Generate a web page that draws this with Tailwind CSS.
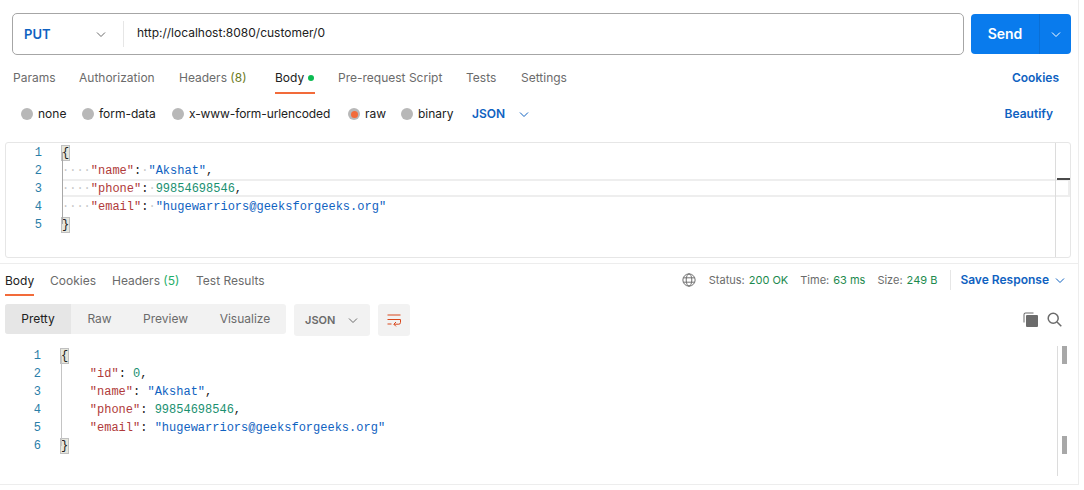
<!DOCTYPE html>
<html lang="en">
<head>
  <meta charset="UTF-8">
  <title>Postman</title>
  <script src="https://cdn.jsdelivr.net/npm/@tailwindcss/browser@4"></script>
</head>
<body class="bg-white font-['Inter',sans-serif] text-[12px] text-[#6b6b6b] overflow-hidden">
<div class="w-[1079px] h-[485px] border-r border-b border-[#ededed] overflow-hidden">

  <!-- Url bar -->
  <div class="flex gap-[7px] pl-3 pt-[13px] h-[55px]">
    <div class="flex shrink-0 items-center w-[952px] h-[42px] border border-[#a6a6a6] rounded-[5px]">
      <span class="w-[64px] pl-[11px] font-semibold text-[#0f62c1] text-[13px] leading-[18px]">PUT</span>
      <svg class="w-3 h-3 ml-[18px] text-[#6b6b6b]" viewBox="0 0 12 12" fill="none" stroke="currentColor"><path d="M2 4.5l4 4 4-4"/></svg>
      <div class="w-px h-[26px] bg-[#e6e6e6] ml-[16px]"></div>
      <span class="ml-[13px] text-[#212121] text-[12px] -mt-[3px]">http://localhost:8080/customer/0</span>
    </div>
    <div class="flex shrink-0 w-[100px] h-[40px] mt-px bg-[#097bed] rounded-[4px] text-white">
      <div class="w-[68px] flex items-center justify-center font-semibold text-[14px] -mt-px">Send</div>
      <div class="w-[32px] flex items-center justify-center border-l border-[#0a6fd6]">
        <svg class="w-3 h-3" viewBox="0 0 12 12" fill="none" stroke="currentColor"><path d="M2 4.5l4 4 4-4"/></svg>
      </div>
    </div>
  </div>

  <!-- Request tabs -->
  <div class="flex h-[39px] pl-[13px] pr-[19px]">
    <div class="pt-[14px] w-[66px]">Params</div>
    <div class="pt-[14px] w-[100px]">Authorization</div>
    <div class="pt-[14px] w-[96px]">Headers <span class="text-[#6b7a1e]">(8)</span></div>
    <div class="w-[63px] pt-[14px]">
      <div class="flex items-start w-[40px] h-[25px] border-b-2 border-[#f26b3a] text-[#212121]">Body<span class="w-[6px] h-[6px] rounded-full bg-[#0cbb52] ml-[4px] mt-[6px]"></span></div>
    </div>
    <div class="pt-[14px] w-[128px]">Pre-request Script</div>
    <div class="pt-[14px] w-[55px]">Tests</div>
    <div class="pt-[14px]">Settings</div>
    <div class="pt-[14px] ml-auto font-semibold text-[#0f62c1]">Cookies</div>
  </div>

  <!-- Body type -->
  <div class="flex items-center h-[42px] pl-[21px] pr-[25px] text-[#212121] pb-[2px]">
    <span class="w-3 h-3 rounded-full bg-[#b8b8b8] mr-[5px]"></span><span class="w-[44px]">none</span>
    <span class="w-3 h-3 rounded-full bg-[#b8b8b8] mr-[5px]"></span><span class="w-[73px]">form-data</span>
    <span class="w-3 h-3 rounded-full bg-[#b8b8b8] mr-[5px]"></span><span class="w-[159px] tracking-[-0.1px]">x-www-form-urlencoded</span>
    <span class="w-3 h-3 rounded-full bg-[#b8b8b8] mr-[5px] flex items-center justify-center"><span class="w-[7px] h-[7px] rounded-full bg-[#f26b3a]"></span></span><span class="w-[36px]">raw</span>
    <span class="w-3 h-3 rounded-full bg-[#b8b8b8] mr-[5px]"></span><span class="w-[54px]">binary</span>
    <span class="font-semibold text-[#0f62c1] w-[46px]">JSON</span>
    <svg class="w-3 h-3 text-[#0f62c1]" viewBox="0 0 12 12" fill="none" stroke="currentColor"><path d="M2 4.5l4 4 4-4"/></svg>
    <span class="ml-auto font-semibold text-[#0f62c1]">Beautify</span>
  </div>

  <!-- Request editor -->
  <div class="relative flex ml-[5px] w-[1066px] h-[116px] mt-[6px] border border-[#e6e6e6] rounded-[3px] font-['Liberation_Mono',monospace] text-[12px] leading-[18px]">
    <div class="absolute left-[57px] right-0 top-[36px] h-[14px] border-y-2 border-r-2 border-[#eeeeee] box-content"></div>
    <div class="w-[36px] pt-[1px] text-right text-[#2a7ea8]"><div>1</div><div>2</div><div>3</div><div>4</div><div>5</div></div>
    <div class="relative ml-[20px] pt-[1px] text-[#212121]">
      <div class="absolute left-0 top-[9px] w-px h-[72px] bg-[#a8a8a8]"></div>
      <div class="whitespace-pre"><span class="bg-[#e6e6dc] outline outline-1 outline-[#c0c0c0]">{</span></div>
      <div class="whitespace-pre"><span class="text-[#c8c8c8]">····</span><span class="text-[#b03a3a]">"name"</span>:<span class="text-[#c8c8c8]">·</span><span class="text-[#0f62c1]">"Akshat"</span>,</div>
      <div class="whitespace-pre"><span class="text-[#c8c8c8]">····</span><span class="text-[#b03a3a]">"phone"</span>:<span class="text-[#c8c8c8]">·</span><span class="text-[#1a9070]">99854698546</span>,</div>
      <div class="whitespace-pre"><span class="text-[#c8c8c8]">····</span><span class="text-[#b03a3a]">"email"</span>:<span class="text-[#c8c8c8]">·</span><span class="text-[#0f62c1]">"hugewarriors@geeksforgeeks.org"</span></div>
      <div class="whitespace-pre"><span class="bg-[#e6e6dc] outline outline-1 outline-[#c0c0c0]">}</span></div>
    </div>
    <div class="absolute top-0 bottom-0 right-[14px] w-px bg-[#dcdcdc]"></div>
    <div class="absolute top-[35px] right-0 w-[13px] h-[2px] bg-[#4a4a4a]"></div>
  </div>

  <!-- Response header -->
  <div class="flex h-[33px] mt-[5px] border-t border-[#ededed] pl-[5px] pr-[12px]">
    <div class="w-[45px] pt-[8px]"><div class="w-[29px] h-[24px] border-b-2 border-[#f26b3a] text-[#212121]">Body</div></div>
    <div class="w-[62px] pt-[8px]">Cookies</div>
    <div class="w-[84px] pt-[8px]">Headers <span class="text-[#1fae6a]">(5)</span></div>
    <div class="pt-[8px]">Test Results</div>
    <div class="ml-auto flex items-center h-[32px] text-[11px]">
      <svg class="w-[14px] h-[14px] mr-[13px] text-[#6b6b6b]" viewBox="0 0 16 16" fill="none" stroke="currentColor" stroke-width="1.1"><circle cx="8" cy="8" r="7"/><ellipse cx="8" cy="8" rx="3.2" ry="7"/><path d="M1.5 5.5h13M1.5 10.5h13"/></svg>
      <span>Status:</span><span class="ml-[4px] text-[#1d8a4e]">200 OK</span>
      <span class="ml-[12px]">Time:</span><span class="ml-[4px] text-[#1d8a4e]">63 ms</span>
      <span class="ml-[12px]">Size:</span><span class="ml-[4px] text-[#1d8a4e]">249 B</span>
      <div class="w-px h-[20px] bg-[#e6e6e6] ml-[13px] mr-[9px]"></div>
      <span class="font-semibold text-[12px] text-[#0f62c1]">Save Response</span>
      <svg class="w-3 h-3 ml-[5px] text-[#0f62c1]" viewBox="0 0 12 12" fill="none" stroke="currentColor"><path d="M2 4.5l4 4 4-4"/></svg>
    </div>
  </div>

  <!-- Response toolbar -->
  <div class="flex items-start h-[43px] mt-[8px] pl-[5px] pr-[16px]">
    <div class="flex w-[281px] h-[30px] bg-[#f2f2f2] rounded-[3px] items-center">
      <span class="flex items-center justify-center w-[66px] h-[30px] bg-[#e6e6e6] rounded-l-[3px] text-[#212121]">Pretty</span>
      <span class="w-[57px] text-center">Raw</span>
      <span class="w-[75px] text-center">Preview</span>
      <span class="w-[83px] text-center pl-[1px]">Visualize</span>
    </div>
    <div class="flex items-center w-[76px] h-[32px] ml-[8px] bg-[#f2f2f2] rounded-[3px] pl-[11px]">
      <span class="font-semibold text-[11px] w-[42px]">JSON</span>
      <svg class="w-3 h-3" viewBox="0 0 12 12" fill="none" stroke="currentColor"><path d="M2 4.5l4 4 4-4"/></svg>
    </div>
    <div class="flex items-center justify-center w-[32px] h-[32px] ml-[8px] bg-[#f2f2f2] rounded-[3px]">
      <svg class="w-4 h-4 text-[#d9481c]" viewBox="0 0 16 16" fill="none" stroke="currentColor"><path d="M1.5 3h13M1.5 7.5h13M1.5 12h4"/><path d="M14.5 7.5v3a1.7 1.7 0 0 1-1.7 1.7H8M10 10l-2.2 2.2L10 14.4"/></svg>
    </div>
    <div class="ml-auto flex items-center gap-[9px] h-[30px]">
      <svg class="w-[15px] h-[15px] text-[#6b6b6b]" viewBox="0 0 15 15" fill="currentColor"><path d="M0.5 2.5a2 2 0 0 1 2-2h8v1h-8a1 1 0 0 0-1 1v8h-1z"/><rect x="3" y="3" width="12" height="12" rx="1"/></svg>
      <svg class="w-[15px] h-[15px] text-[#6b6b6b]" viewBox="0 0 15 15" fill="none" stroke="currentColor" stroke-width="1.5"><circle cx="6.2" cy="6.2" r="5"/><path d="M10 10l4.3 4.3"/></svg>
    </div>
  </div>

  <!-- Response body -->
  <div class="relative flex h-[136px] ml-[5px] font-['Liberation_Mono',monospace] text-[12px] leading-[18px]">
    <div class="w-[36px] text-right text-[#2a7ea8]"><div>1</div><div>2</div><div>3</div><div>4</div><div>5</div><div>6</div></div>
    <div class="relative ml-[20px] text-[#212121]">
      <div class="absolute left-0 top-[9px] w-px h-[90px] bg-[#c4c4c4]"></div>
      <div class="whitespace-pre"><span class="bg-[#e6e6dc] outline outline-1 outline-[#c0c0c0]">{</span></div>
      <div class="whitespace-pre">    <span class="text-[#b03a3a]">"id"</span>: <span class="text-[#1a9070]">0</span>,</div>
      <div class="whitespace-pre">    <span class="text-[#b03a3a]">"name"</span>: <span class="text-[#0f62c1]">"Akshat"</span>,</div>
      <div class="whitespace-pre">    <span class="text-[#b03a3a]">"phone"</span>: <span class="text-[#1a9070]">99854698546</span>,</div>
      <div class="whitespace-pre">    <span class="text-[#b03a3a]">"email"</span>: <span class="text-[#0f62c1]">"hugewarriors@geeksforgeeks.org"</span></div>
      <div class="whitespace-pre"><span class="bg-[#e6e6dc] outline outline-1 outline-[#c0c0c0]">}</span></div>
    </div>
    <div class="absolute -top-[1px] h-[130px] left-[1052px] w-px bg-[#dcdcdc]"></div>
    <div class="absolute -top-[1px] h-[18px] left-[1057px] w-[5px] bg-[#a8a8a8]"></div>
    <div class="absolute top-[89px] h-[18px] left-[1057px] w-[5px] bg-[#a8a8a8]"></div>
  </div>
</div>
</body>
</html>
